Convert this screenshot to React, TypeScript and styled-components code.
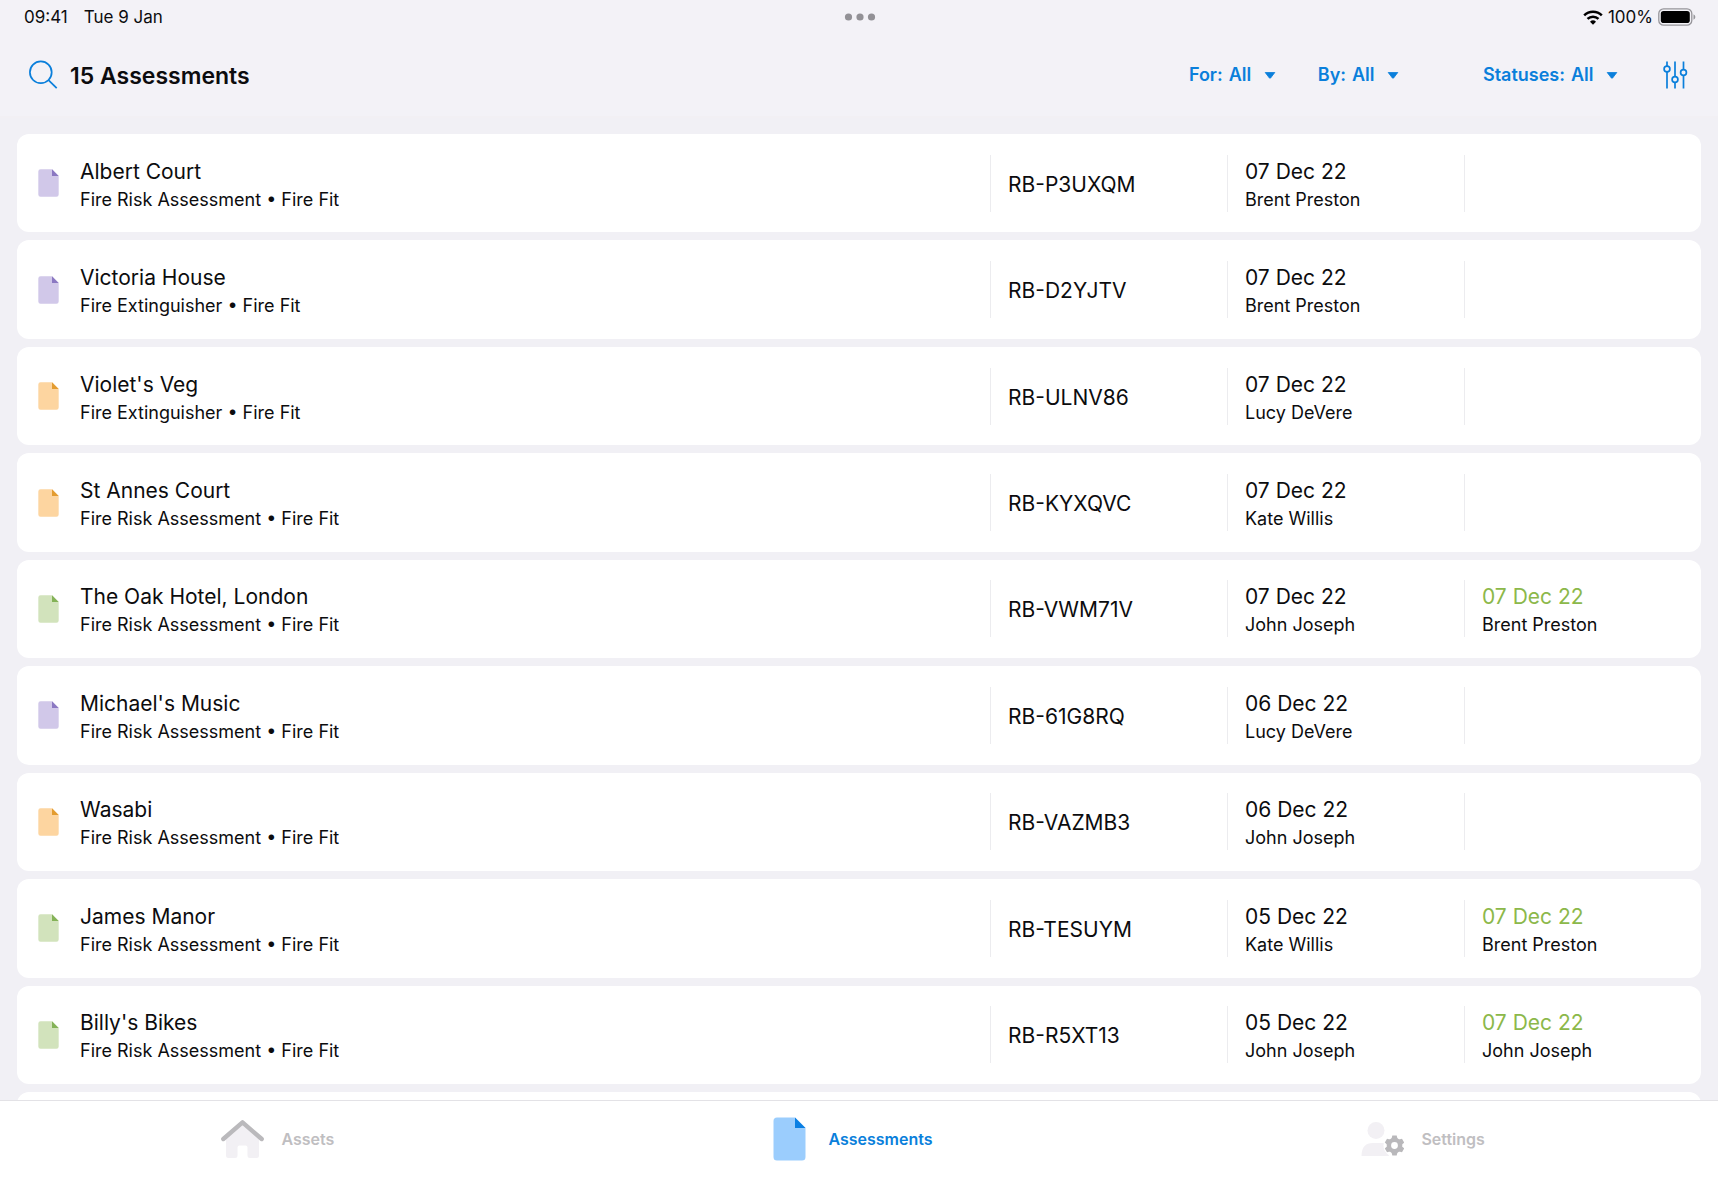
import React from "react";
import styled, { createGlobalStyle } from "styled-components";

const BLUE = "#0a7fdb";

const GlobalStyle = createGlobalStyle`
  *, *::before, *::after { box-sizing: border-box; }
  body { margin: 0; background: #f2f1f6; }
  button, select { font: inherit; color: inherit; background: none; border: 0; padding: 0; margin: 0; cursor: pointer; }
`;

const Screen = styled.div`
  display: flex;
  flex-direction: column;
  height: 100vh;
  overflow: hidden;
  background: #f1f0f5;
  color: #0c0c0e;
  font-family: Inter, "Liberation Sans", sans-serif;
`;

const StatusBar = styled.div`
  display: grid;
  grid-template-columns: 1fr auto 1fr;
  align-items: center;
  height: 34px;
  padding: 0 22px 0 24px;
  background: #f3f2f7;
  font-size: 17px;
  line-height: 20px;
`;

const StatusLeft = styled.div`
  display: flex;
  gap: 16px;
`;

const StatusRight = styled.div`
  display: flex;
  align-items: center;
  justify-content: flex-end;
  gap: 5px;
`;

const Header = styled.header`
  display: flex;
  align-items: center;
  justify-content: space-between;
  height: 84px;
  padding: 0 30px 0 28px;
  background: #f3f2f7;
  border-bottom: 2px solid #f2f0f4;
`;

const HeaderTitle = styled.div`
  display: flex;
  align-items: center;
  gap: 12px;
`;

const Title = styled.h1`
  margin: 0;
  padding-top: 2px;
  font-size: 23px;
  line-height: 28px;
  font-weight: 600;
`;

const IconButton = styled.button`
  display: flex;
`;

const Filters = styled.div`
  display: flex;
  align-items: center;
  color: ${BLUE};
`;

const Filter = styled.label<{ $after: number }>`
  display: flex;
  align-items: center;
  margin-right: ${(p) => p.$after}px;
  font-size: 18px;
  line-height: 24px;
  font-weight: 600;

  select {
    appearance: none;
    margin: 0 12px 0 6px;
  }
`;

const Main = styled.main`
  flex: 1;
  min-height: 0;
  padding: 16px 17px 0;
  overflow: hidden;
`;

const Table = styled.table`
  display: block;
  height: 100%;
`;

/* Nine full rows fit the list, with 8px of the next one showing below. */
const Rows = styled.tbody`
  display: grid;
  height: 100%;
  grid-auto-rows: calc((100% - 80px) / 9);
  gap: 8px;
`;

const Row = styled.tr`
  display: grid;
  grid-template-columns: minmax(0, 1fr) repeat(3, 237px);
  align-items: center;
  background: #fff;
  border-radius: 12px;
`;

const NameCell = styled.td`
  display: flex;
  align-items: center;
  gap: 21px;
  padding: 0 0 0 21px;
`;

const NameText = styled.div`
  padding-top: 3px;
`;

const Cell = styled.td`
  display: flex;
  flex-direction: column;
  justify-content: center;
  height: 57px;
  padding: 3px 0 0 17px;
  border-left: 1px solid #ececef;
`;

const Primary = styled.div<{ $done?: boolean }>`
  font-size: 21px;
  line-height: 30px;
  color: ${(p) => (p.$done ? "#8cb84a" : "inherit")};
`;

const Secondary = styled.div`
  font-size: 18px;
  line-height: 26px;
`;

const TabBar = styled.nav`
  display: grid;
  grid-template-columns: repeat(3, 1fr);
  height: 102px;
  flex: none;
  padding: 16px 0 0;
  border-top: 1px solid #e3e2e6;
  background: #fff;
`;

const Tab = styled.button<{ $active?: boolean }>`
  display: flex;
  align-items: center;
  justify-content: center;
  align-self: start;
  gap: 17px;
  height: 44px;
  padding-right: 17px;
  font-size: 16px;
  line-height: 20px;
  font-weight: 600;
  color: ${(p) => (p.$active ? BLUE : "#bfbec1")};
`;

const docColours = {
  purple: ["#d1c8e9", "#8b78c2"],
  orange: ["#fdd5a0", "#e39c30"],
  green: ["#d2e3bc", "#84b257"],
  blue: ["#9bcdfd", "#0a7fe3"],
};

type Tone = keyof typeof docColours;

const DocIcon = ({ tone, width, height }: { tone: Tone; width: number; height: number }) => (
  <svg width={width} height={height} viewBox="0 0 33 44" aria-hidden="true">
    <path d="M4 0.5H22L32.500 11V40a3.500 3.500 0 0 1-3.500 3.500H4A3.500 3.500 0 0 1 0.500 40V4A3.500 3.500 0 0 1 4 0.500Z" fill={docColours[tone][0]} />
    <path d="M22 0.500L32.500 11H22Z" fill={docColours[tone][1]} />
  </svg>
);

const SearchIcon = () => (
  <svg width="30" height="30" viewBox="0 0 30 30" fill="none" stroke={BLUE} strokeWidth="1.700" aria-hidden="true">
    <circle cx="12.800" cy="12.300" r="10.900" />
    <path d="M20.500 20.200L28.700 28.200" />
  </svg>
);

const SlidersIcon = () => (
  <svg width="26" height="28" viewBox="0 0 26 28" fill="none" stroke={BLUE} strokeWidth="1.700" aria-hidden="true">
    <path d="M5 0.500V5M5 11V27.500M13 0.500V15.500M13 21.500V27.500M21.500 0.500V8.500M21.500 14.500V27.500" />
    <circle cx="5" cy="8" r="2.900" />
    <circle cx="13" cy="18.500" r="2.900" />
    <circle cx="21.500" cy="11.500" r="2.900" />
  </svg>
);

const Caret = () => (
  <svg width="12" height="7" viewBox="0 0 12 7" aria-hidden="true">
    <path d="M1.200 0.500H10.800L6.600 6Q6 6.700 5.400 6Z" fill={BLUE} stroke={BLUE} strokeWidth="0.800" strokeLinejoin="round" />
  </svg>
);

const DotsIcon = () => (
  <svg width="32" height="8" viewBox="0 0 32 8" fill="#929196" aria-hidden="true">
    <circle cx="4.500" cy="4" r="3.600" />
    <circle cx="16" cy="4" r="3.600" />
    <circle cx="27.500" cy="4" r="3.600" />
  </svg>
);

const WifiIcon = () => (
  <svg width="20" height="15" viewBox="0 0 20 15" fill="none" stroke="#000" strokeWidth="2.500" aria-hidden="true">
    <path d="M1.200 5.300A12.600 12.600 0 0 1 18.800 5.300" />
    <path d="M4.500 8.900A7.900 7.900 0 0 1 15.500 8.900" />
    <path d="M10 14.700L7 11.700A4.300 4.300 0 0 1 13 11.700Z" fill="#000" stroke="none" />
  </svg>
);

const BatteryIcon = () => (
  <svg width="38" height="18" viewBox="0 0 38 18" aria-hidden="true">
    <rect x="0.800" y="0.800" width="33" height="16.400" rx="4.800" fill="none" stroke="#96959a" strokeWidth="1.300" />
    <rect x="2.800" y="2.900" width="29" height="12.200" rx="2.800" fill="#000" />
    <path d="M35.500 6.300Q37.400 7.200 37.400 9T35.500 11.700Z" fill="#96959a" />
  </svg>
);

const HomeIcon = () => (
  <svg width="43" height="40" viewBox="0 0 43 40" aria-hidden="true">
    <path d="M5 18L21.500 4L38 18V36.500Q38 39 35.500 39H29Q26.500 39 26.500 36.500V28.500Q26.500 26.500 24.500 26.500H18.500Q16.500 26.500 16.500 28.500V36.500Q16.500 39 14 39H7.500Q5 39 5 36.500Z" fill="#f2f0f4" />
    <path d="M2.300 20L21.500 3.300L40.700 20" fill="none" stroke="#bab9bc" strokeWidth="4.400" strokeLinecap="round" strokeLinejoin="round" />
  </svg>
);

const gearTeeth = [0, 60, 120, 180, 240, 300];

const SettingsIcon = () => (
  <svg width="43" height="36" viewBox="0 0 43 36" aria-hidden="true">
    <circle cx="15" cy="9.500" r="8.500" fill="#f2f0f4" />
    <path d="M0.500 35Q0.500 22 12 22H23L28 35Z" fill="#f2f0f4" />
    <circle cx="33.500" cy="24.500" r="11" fill="#fff" />
    <g fill="#b9b8bb">
      {gearTeeth.map((angle) => (
        <path key={angle} d="M30.300 18.500L31.300 14.600H35.700L36.700 18.500Z" transform={`rotate(${angle} 33.500 24.500)`} />
      ))}
    </g>
    <circle cx="33.500" cy="24.500" r="5.600" fill="none" stroke="#b9b8bb" strokeWidth="4.400" />
  </svg>
);

interface Assessment {
  tone: Tone;
  name: string;
  kind: string;
  code: string;
  date: string;
  person: string;
  doneDate?: string;
  doneBy?: string;
}

const RISK = "Fire Risk Assessment • Fire Fit";
const EXTINGUISHER = "Fire Extinguisher • Fire Fit";

const assessments: Assessment[] = [
  { tone: "purple", name: "Albert Court", kind: RISK, code: "RB-P3UXQM", date: "07 Dec 22", person: "Brent Preston" },
  { tone: "purple", name: "Victoria House", kind: EXTINGUISHER, code: "RB-D2YJTV", date: "07 Dec 22", person: "Brent Preston" },
  { tone: "orange", name: "Violet's Veg", kind: EXTINGUISHER, code: "RB-ULNV86", date: "07 Dec 22", person: "Lucy DeVere" },
  { tone: "orange", name: "St Annes Court", kind: RISK, code: "RB-KYXQVC", date: "07 Dec 22", person: "Kate Willis" },
  { tone: "green", name: "The Oak Hotel, London", kind: RISK, code: "RB-VWM71V", date: "07 Dec 22", person: "John Joseph", doneDate: "07 Dec 22", doneBy: "Brent Preston" },
  { tone: "purple", name: "Michael's Music", kind: RISK, code: "RB-61G8RQ", date: "06 Dec 22", person: "Lucy DeVere" },
  { tone: "orange", name: "Wasabi", kind: RISK, code: "RB-VAZMB3", date: "06 Dec 22", person: "John Joseph" },
  { tone: "green", name: "James Manor", kind: RISK, code: "RB-TESUYM", date: "05 Dec 22", person: "Kate Willis", doneDate: "07 Dec 22", doneBy: "Brent Preston" },
  { tone: "green", name: "Billy's Bikes", kind: RISK, code: "RB-R5XT13", date: "05 Dec 22", person: "John Joseph", doneDate: "07 Dec 22", doneBy: "John Joseph" },
];

const filters = [
  { label: "For:", after: 42 },
  { label: "By:", after: 84 },
  { label: "Statuses:", after: 44 },
];

export default function App() {
  return (
    <Screen>
      <GlobalStyle />
      <StatusBar>
        <StatusLeft>
          <span>09:41</span>
          <span>Tue 9 Jan</span>
        </StatusLeft>
        <DotsIcon />
        <StatusRight>
          <WifiIcon />
          <span>100%</span>
          <BatteryIcon />
        </StatusRight>
      </StatusBar>
      <Header>
        <HeaderTitle>
          <IconButton type="button">
            <SearchIcon />
          </IconButton>
          <Title>15 Assessments</Title>
        </HeaderTitle>
        <Filters>
          {filters.map((f) => (
            <Filter key={f.label} $after={f.after}>
              {f.label}
              <select>
                <option>All</option>
              </select>
              <Caret />
            </Filter>
          ))}
          <IconButton type="button">
            <SlidersIcon />
          </IconButton>
        </Filters>
      </Header>
      <Main>
        <Table>
          <Rows>
            {assessments.map((a) => (
              <Row key={a.code}>
                <NameCell>
                  <DocIcon tone={a.tone} width={21} height={28} />
                  <NameText>
                    <Primary>{a.name}</Primary>
                    <Secondary>{a.kind}</Secondary>
                  </NameText>
                </NameCell>
                <Cell>
                  <Primary>{a.code}</Primary>
                </Cell>
                <Cell>
                  <Primary>{a.date}</Primary>
                  <Secondary>{a.person}</Secondary>
                </Cell>
                <Cell>
                  {a.doneDate && <Primary $done>{a.doneDate}</Primary>}
                  {a.doneBy && <Secondary>{a.doneBy}</Secondary>}
                </Cell>
              </Row>
            ))}
            <Row />
          </Rows>
        </Table>
      </Main>
      <TabBar>
        <Tab type="button">
          <HomeIcon />
          Assets
        </Tab>
        <Tab type="button" $active>
          <DocIcon tone="blue" width={43} height={44} />
          Assessments
        </Tab>
        <Tab type="button">
          <SettingsIcon />
          Settings
        </Tab>
      </TabBar>
    </Screen>
  );
}
